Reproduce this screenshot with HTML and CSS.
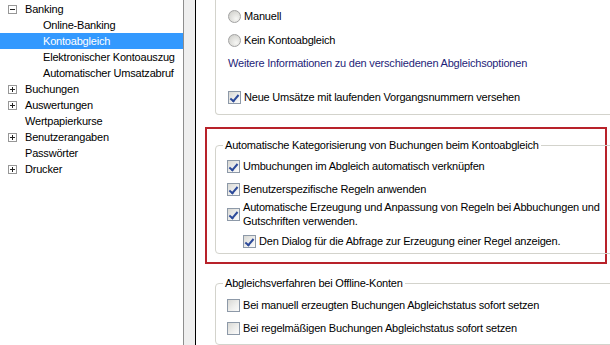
FILE: index.html
```html
<!DOCTYPE html>
<html lang="de">
<head>
<meta charset="utf-8">
<title>Optionen – Kontoabgleich</title>
<link rel="stylesheet" href="styles.css">
</head>
<body>
<div class="window">
  <nav class="tree">
    <div class="node top"><span class="exp minus"></span><span class="label">Banking</span></div>
    <div class="node child"><span class="label">Online-Banking</span></div>
    <div class="node child selected"><span class="label">Kontoabgleich</span></div>
    <div class="node child"><span class="label">Elektronischer Kontoauszug</span></div>
    <div class="node child"><span class="label">Automatischer Umsatzabruf</span></div>
    <div class="node top"><span class="exp plus"></span><span class="label">Buchungen</span></div>
    <div class="node top"><span class="exp plus"></span><span class="label">Auswertungen</span></div>
    <div class="node top"><span class="exp none"></span><span class="label">Wertpapierkurse</span></div>
    <div class="node top"><span class="exp plus"></span><span class="label">Benutzerangaben</span></div>
    <div class="node top"><span class="exp none"></span><span class="label">Passwörter</span></div>
    <div class="node top"><span class="exp plus"></span><span class="label">Drucker</span></div>
  </nav>
  <div class="splitter"></div>
  <main class="content">
    <div class="box box-cut">
      <div class="opt r1"><span class="radio"></span><span>Manuell</span></div>
      <div class="opt r2"><span class="radio"></span><span>Kein Kontoabgleich</span></div>
      <div class="link">Weitere Informationen zu den verschiedenen Abgleichsoptionen</div>
      <div class="opt r4"><span class="cb on"></span><span>Neue Umsätze mit laufenden Vorgangsnummern versehen</span></div>
    </div>

    <div class="highlight">
      <fieldset class="box group">
        <legend>Automatische Kategorisierung von Buchungen beim Kontoabgleich</legend>
        <div class="opt g1"><span class="cb on"></span><span>Umbuchungen im Abgleich automatisch verknüpfen</span></div>
        <div class="opt g2"><span class="cb on"></span><span>Benutzerspezifische Regeln anwenden</span></div>
        <div class="opt g3 multi"><span class="cb on"></span><span>Automatische Erzeugung und Anpassung von Regeln bei Abbuchungen und Gutschriften verwenden.</span></div>
        <div class="opt g4 sub"><span class="cb on"></span><span>Den Dialog für die Abfrage zur Erzeugung einer Regel anzeigen.</span></div>
      </fieldset>
    </div>

    <fieldset class="box group offline">
      <legend>Abgleichsverfahren bei Offline-Konten</legend>
      <div class="opt o1"><span class="cb"></span><span>Bei manuell erzeugten Buchungen Abgleichstatus sofort setzen</span></div>
      <div class="opt o2"><span class="cb"></span><span>Bei regelmäßigen Buchungen Abgleichstatus sofort setzen</span></div>
    </fieldset>
  </main>
</div>
</body>
</html>
```

FILE: styles.css
```css
* { box-sizing: border-box; }
html, body { margin: 0; padding: 0; background: #fff; }
body {
  font-family: "Liberation Sans", Arial, sans-serif;
  font-size: 11px;
  letter-spacing: -0.2px;
  color: #000;
  width: 610px;
  height: 345px;
  overflow: hidden;
}
.window { display: flex; height: 345px; }

/* tree */
.tree {
  width: 184px;
  flex: none;
  border-right: 1px solid #8e8e8e;
  padding-top: 1px;
  background: #fff;
}
.node {
  display: flex;
  align-items: center;
  height: 16px;
  line-height: 16px;
  white-space: nowrap;
}
.node.top { padding-left: 8px; }
.node.child { padding-left: 43px; }
.node.selected { background: #3399fe; color: #fff; }
.exp {
  width: 9px; height: 9px;
  margin-right: 8px;
  position: relative;
  flex: none;
}
.exp.plus, .exp.minus { border: 1px solid #979797; background: #fff; }
.exp.plus::before, .exp.minus::before {
  content: ""; position: absolute; left: 1px; top: 3px; width: 5px; height: 1px; background: #222;
}
.exp.plus::after {
  content: ""; position: absolute; left: 3px; top: 1px; width: 1px; height: 5px; background: #222;
}

.splitter {
  width: 12px;
  flex: none;
  background: #efefef;
  border-right: 1px solid #000;
}

/* content */
.content {
  flex: 1;
  overflow: hidden;
  padding-left: 9px;
}
.box {
  width: 420px;
  border: 1px solid #d3d3cc;
  border-radius: 4px;
}
.box-cut {
  margin-left: 10px;
  border-top: none;
  border-radius: 0 0 4px 4px;
  padding: 8px 0 9px 12px;
}
.opt {
  display: flex;
  align-items: center;
  height: 16px;
  white-space: nowrap;
}
.opt > span:last-child { margin-left: 3px; }
.r2 { margin-top: 8px; }
.link {
  margin-top: 7px;
  height: 16px;
  line-height: 16px;
  color: #1e1e78;
  white-space: nowrap;
}
.r4 { margin-top: 18px; }

.radio {
  width: 13px; height: 13px; flex: none;
  border-radius: 50%;
  border: 1px solid #a2a2a2;
  background: radial-gradient(circle at 65% 70%, #f6f6f4 0%, #dcdcd8 60%, #c8c8c4 100%);
}
.cb {
  width: 13px; height: 13px; flex: none;
  border: 1px solid #8d99a8;
  background: linear-gradient(135deg, #d8d8d4 0%, #eeeeec 55%, #fbfbfb 100%);
  position: relative;
}
.cb.on::after {
  content: "";
  position: absolute;
  left: 3px; top: 1px;
  width: 3px; height: 7px;
  border: solid #2c4a9a;
  border-width: 0 2px 2px 0;
  transform: rotate(40deg);
}

.highlight {
  margin-top: 12px;
  width: 402px;
  border: 2px solid #b8222a;
  padding: 8px 0 8px 8px;
}
fieldset.group {
  margin: 0;
  padding: 0 0 4px 11px;
  min-width: 0;
}
fieldset.group legend {
  padding: 0 2px;
  margin-left: -4px;
  line-height: 16px;
  height: 16px;
  white-space: nowrap;
}
.g1 { margin-top: 5px; }
.g2 { margin-top: 7px; }
.g3 { margin-top: 3px; }
.multi { height: 28px; }
.multi > span:last-child { white-space: normal; line-height: 14px; width: 364px; }
.g4 { margin-top: 5px; }
.sub { padding-left: 16px; }

.offline {
  margin-left: 10px !important;
  margin-top: 11px !important;
  padding-bottom: 8px !important;
}
.o1 { margin-top: 6px; }
.o2 { margin-top: 7px; }
```
